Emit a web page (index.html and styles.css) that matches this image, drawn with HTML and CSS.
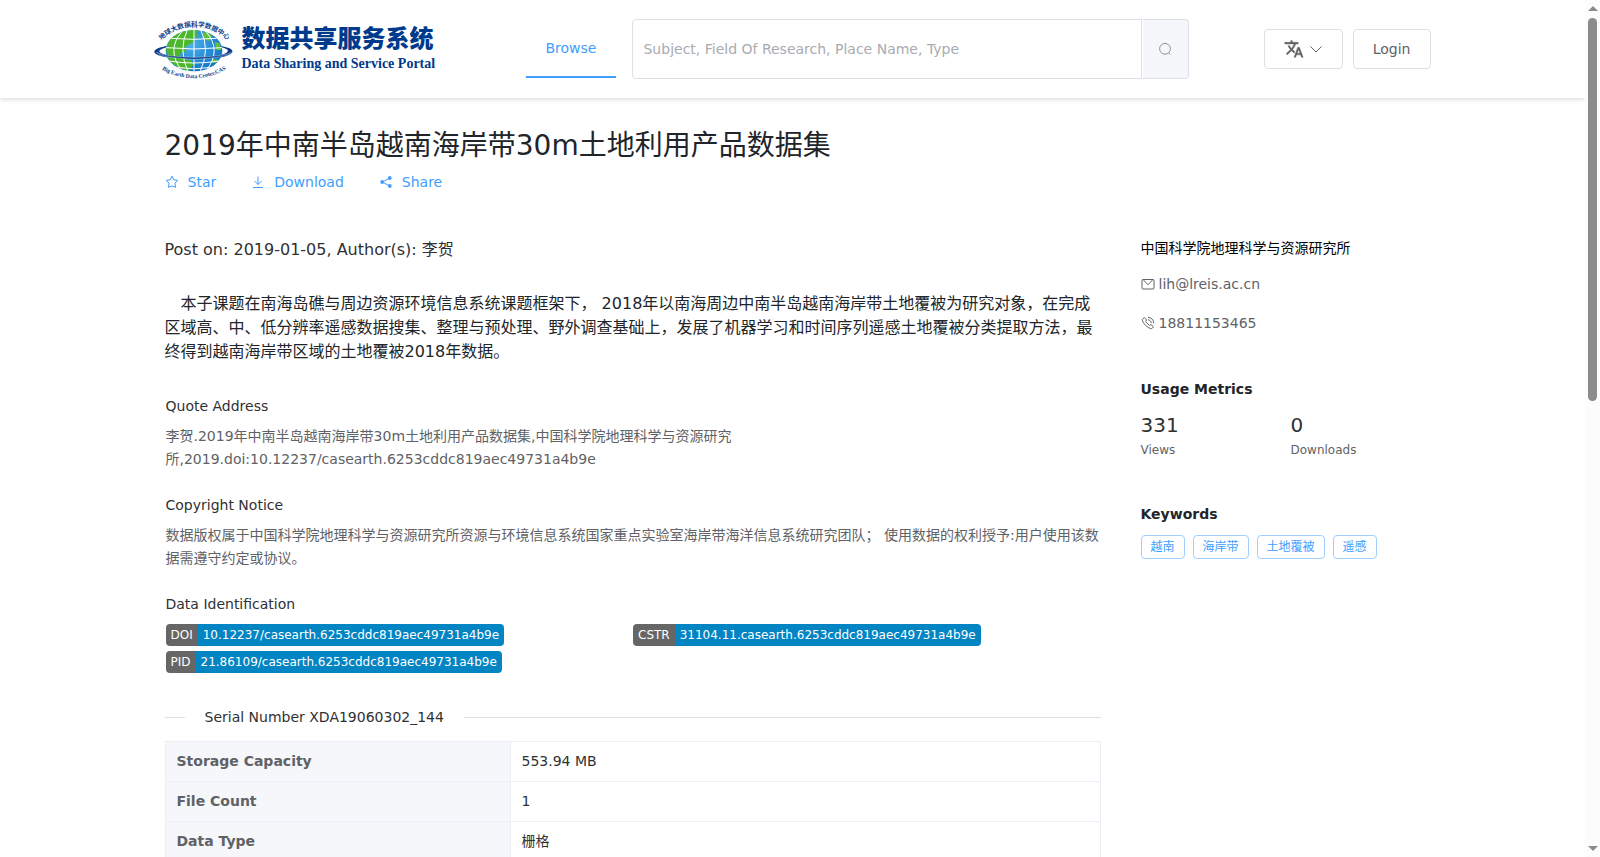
FILE: index.html
```
<!DOCTYPE html>
<html lang="zh-CN">

<head>
    <meta charset="UTF-8">
    <meta name="viewport" content="width=device-width, initial-scale=1.0">
    <title>2019年中南半岛越南海岸带30m土地利用产品数据集</title>
    <link rel="stylesheet" href="styles.css">
</head>

<body>
    <div class="page">
        <header class="header">
            <div class="container header-inner">
                <a class="logo" href="#">
                    <svg class="logo-globe" viewBox="40 55 240 189" aria-hidden="true">
                        <defs>
                            <path id="arc-top" d="M58 126 A140 140 0 0 1 264 126" />
                            <path id="arc-bottom" d="M60 207 Q158 264 260 207" />
                            <radialGradient id="sea" cx="0.4" cy="0.35" r="0.7">
                                <stop offset="0" stop-color="#4fb4ec" />
                                <stop offset="1" stop-color="#0a6fc2" />
                            </radialGradient>
                            <clipPath id="ball"><ellipse cx="160" cy="153" rx="85" ry="62" /></clipPath>
                        </defs>
                        <path d="M82 138 C30 146 28 163 74 172 C130 184 200 184 250 171 C290 160 280 145 240 139 L242 143 C268 149 270 158 240 166 C195 176 125 176 78 166 C46 158 50 150 82 142 Z" fill="#0b3d8c" />
                        <g clip-path="url(#ball)">
                            <rect x="70" y="85" width="180" height="135" fill="url(#sea)" />
                            <path d="M76 150 C82 120 100 98 140 91 L178 92 L166 100 L174 108 L160 116 L158 128 L146 134 L130 146 L138 156 L122 158 L116 168 L132 178 L150 182 L158 194 L146 214 L116 206 L86 184 Z" fill="#4cb72c" />
                            <path d="M188 98 L206 100 L214 112 L204 124 L190 116 Z M222 128 L236 130 L242 150 L228 152 Z M216 178 L234 180 L226 190 L212 188 Z" fill="#63c03b" />
                            <g fill="none" stroke="#fff" stroke-width="3">
                                <path d="M160 91 V216 M140 91 Q112 150 142 216 M180 91 Q210 150 178 216 M124 96 Q76 150 122 211 M196 96 Q244 150 198 211" />
                                <path d="M92 116 Q160 122 228 116 M76 144 Q160 152 244 144 M84 184 Q160 196 236 184 M108 203 Q160 212 212 203" />
                            </g>
                        </g>
                        <path d="M48 158 Q66 170 160 173 Q254 170 272 158 Q264 174 160 179 Q56 174 48 158 Z" fill="#0b3d8c" stroke="#fff" stroke-width="1" />
                        <text class="globe-zh"><textPath href="#arc-top" startOffset="50%">地球大数据科学数据中心</textPath></text>
                        <text class="globe-en"><textPath href="#arc-bottom" startOffset="50%">Big Earth Data Center,CAS</textPath></text>
                    </svg>
                    <span class="logo-text">
                        <span class="logo-zh">数据共享服务系统</span>
                        <span class="logo-en">Data Sharing and Service Portal</span>
                    </span>
                </a>
                <nav class="nav">
                    <a class="nav-item" href="#">Browse</a>
                </nav>
                <form class="search">
                    <input class="search-input" type="text" aria-label="Search" placeholder="Subject, Field Of Research, Place Name, Type">
                    <button class="search-btn" type="button" aria-label="Search">
                        <svg class="icon" viewBox="0 0 14 14"><circle cx="7" cy="6.8" r="5.4" /><path d="M10.6 10.8l1.8 1.8" /></svg>
                    </button>
                </form>
                <div class="actions">
                    <button class="btn" type="button" aria-label="Language">
                        <svg class="icon-lang" viewBox="0 0 24 24"><path d="M12.87 15.07l-2.54-2.51.03-.03c1.74-1.94 2.98-4.17 3.71-6.53H17V4h-7V2H8v2H1v1.99h11.17C11.5 7.92 10.44 9.75 9 11.35 8.07 10.32 7.3 9.19 6.69 8h-2c.73 1.63 1.73 3.17 2.98 4.56l-5.09 5.02L4 19l5-5 3.11 3.11.76-2.04zM18.5 10h-2L12 22h2l1.12-3h4.75L21 22h2l-4.5-12zm-2.62 7l1.62-4.33L19.12 17h-3.24z" /></svg>
                        <svg class="icon" viewBox="0 0 14 14"><path d="M1.5 4.500l5.500 5.500 5.500-5.500" /></svg>
                    </button>
                    <button class="btn" type="button">Login</button>
                </div>
            </div>
        </header>

        <div class="container content">
            <h1 class="title">2019年中南半岛越南海岸带30m土地利用产品数据集</h1>
            <div class="links">
                <a class="link" href="#">
                    <svg class="icon" viewBox="0 0 14 14"><path d="M7 1.200l1.800 3.600 4 .6-2.900 2.800.7 4.200L7 10.900l-3.600 1.500.7-4.200L1.200 5.400l4-.6z" /></svg>
                    Star
                </a>
                <a class="link" href="#">
                    <svg class="icon" viewBox="0 0 14 14"><path d="M7 1.500v8M3.500 6L7 9.500 10.500 6M2 12.500h10" /></svg>
                    Download
                </a>
                <a class="link" href="#">
                    <svg class="icon" viewBox="0 0 14 14"><path d="M10.800 3L3.300 7l7.500 4" /><g fill="currentColor" stroke="none"><circle cx="10.800" cy="3" r="1.900" /><circle cx="3.200" cy="7" r="1.900" /><circle cx="10.800" cy="11" r="1.900" /></g></svg>
                    Share
                </a>
            </div>

            <div class="columns">
                <main class="main">
                    <p class="post">Post on: 2019-01-05, Author(s): 李贺</p>
                    <p class="summary">本子课题在南海岛礁与周边资源环境信息系统课题框架下， 2018年以南海周边中南半岛越南海岸带土地覆被为研究对象，在完成区域高、中、低分辨率遥感数据搜集、整理与预处理、野外调查基础上，发展了机器学习和时间序列遥感土地覆被分类提取方法，最终得到越南海岸带区域的土地覆被2018年数据。</p>

                    <section class="block">
                        <h2 class="block-title">Quote Address</h2>
                        <p class="block-text">李贺.2019年中南半岛越南海岸带30m土地利用产品数据集,中国科学院地理科学与资源研究所,2019.doi:10.12237/casearth.6253cddc819aec49731a4b9e</p>
                    </section>
                    <section class="block">
                        <h2 class="block-title">Copyright Notice</h2>
                        <p class="block-text">数据版权属于中国科学院地理科学与资源研究所资源与环境信息系统国家重点实验室海岸带海洋信息系统研究团队； 使用数据的权利授予:用户使用该数据需遵守约定或协议。</p>
                    </section>
                    <section class="block">
                        <h2 class="block-title">Data Identification</h2>
                        <div class="ids">
                            <div class="id"><span class="id-name">DOI</span><span class="id-value">10.12237/casearth.6253cddc819aec49731a4b9e</span></div>
                            <div class="id"><span class="id-name">CSTR</span><span class="id-value">31104.11.casearth.6253cddc819aec49731a4b9e</span></div>
                            <div class="id"><span class="id-name">PID</span><span class="id-value">21.86109/casearth.6253cddc819aec49731a4b9e</span></div>
                        </div>
                    </section>

                    <div class="divider">Serial Number XDA19060302_144</div>

                    <table class="info">
                        <tr>
                            <th scope="row">Storage Capacity</th>
                            <td>553.94 MB</td>
                        </tr>
                        <tr>
                            <th scope="row">File Count</th>
                            <td>1</td>
                        </tr>
                        <tr>
                            <th scope="row">Data Type</th>
                            <td>栅格</td>
                        </tr>
                    </table>
                </main>

                <aside class="side">
                    <p class="org">中国科学院地理科学与资源研究所</p>
                    <p class="contact">
                        <svg class="icon" viewBox="0 0 14 14"><rect x="1" y="2.500" width="12" height="9.500" rx="1" /><path d="M2.500 3L7 7.800 11.500 3" /></svg>
                        lih@lreis.ac.cn
                    </p>
                    <p class="contact">
                        <svg class="icon" viewBox="0 0 14 14"><path d="M3.300 1.500L5.700 4 4.500 5.600l4 4L10 8.400l2.500 2.400-1.800 1.900C7.500 13 .8 6.500 1.300 3.500zM7 1.300c3 0 5.700 2.500 5.700 5.700M7 3.800c1.800 0 3.200 1.400 3.200 3.200" /></svg>
                        18811153465
                    </p>

                    <h2 class="side-title">Usage Metrics</h2>
                    <div class="metrics">
                        <div class="metric"><span class="metric-num">331</span><span class="metric-name">Views</span></div>
                        <div class="metric"><span class="metric-num">0</span><span class="metric-name">Downloads</span></div>
                    </div>

                    <h2 class="side-title">Keywords</h2>
                    <div class="tags">
                        <span class="tag">越南</span>
                        <span class="tag">海岸带</span>
                        <span class="tag">土地覆被</span>
                        <span class="tag">遥感</span>
                    </div>
                </aside>
            </div>
        </div>
    </div>

    <div class="scrollbar" aria-hidden="true">
        <span class="arrow arrow-up"></span>
        <span class="thumb"></span>
        <span class="arrow arrow-down"></span>
    </div>
</body>

</html>
```
FILE: styles.css
```
*,
*::before,
*::after {
    box-sizing: border-box;
}

body {
    margin: 0;
    display: flex;
    height: 100vh;
    overflow: hidden;
    font-family: "DejaVu Sans", "Noto Sans CJK SC", sans-serif;
    font-size: 14px;
    line-height: 24px;
    color: #212529;
    background: #fff;
}

h1,
h2,
p {
    margin: 0;
    font-weight: normal;
}

a {
    text-decoration: none;
}

button,
input {
    font-family: inherit;
    font-size: 14px;
}

.page {
    flex: 1;
    min-width: 0;
    overflow-y: auto;
    scrollbar-width: none;
}

.container {
    max-width: 1280px;
    margin: 0 auto;
}

.icon {
    width: 14px;
    height: 14px;
    flex: none;
    fill: none;
    stroke: currentColor;
    stroke-width: 1;
}

/* header */
.header {
    box-shadow: 0 2px 4px rgba(0, 0, 0, 0.12);
}

.header-inner {
    display: flex;
    align-items: center;
    height: 98px;
    padding: 0 2px 0 1px;
}

.logo {
    display: flex;
    align-items: center;
    gap: 8px;
    width: 372px;
    color: #003a8c;
}

.logo-globe {
    width: 80px;
    height: 63px;
    overflow: visible;
}

.globe-zh {
    font-size: 20px;
    font-weight: bold;
    text-anchor: middle;
    fill: #0b3d8c;
}

.globe-en {
    font-family: "Liberation Serif", serif;
    font-size: 17px;
    font-weight: bold;
    text-anchor: middle;
    fill: #0b3d8c;
}

.logo-text {
    display: flex;
    flex-direction: column;
    white-space: nowrap;
}

.logo-zh {
    font-family: "Noto Sans CJK SC", sans-serif;
    font-size: 24px;
    font-weight: 900;
    line-height: 30px;
}

.logo-en {
    font-family: "Liberation Serif", serif;
    font-size: 14px;
    font-weight: bold;
    line-height: 24px;
}

.nav-item {
    display: block;
    height: 58px;
    padding: 0 20px;
    line-height: 56px;
    color: #409eff;
    border-bottom: 2px solid #409eff;
}

.search {
    display: flex;
    flex: 1;
    height: 60px;
    margin: 0 75px 0 16px;
}

.search-input {
    flex: 1;
    min-width: 0;
    padding: 0 10px;
    color: #606266;
    border: 1px solid #dcdfe6;
    border-radius: 4px 0 0 4px;
    outline: none;
}

.search-input::placeholder {
    color: #a8abb2;
}

.search-btn {
    display: flex;
    align-items: center;
    justify-content: center;
    width: 47px;
    padding: 0;
    color: #909399;
    background: #f5f7fa;
    border: 1px solid #dcdfe6;
    border-left-color: #fff;
    border-radius: 0 4px 4px 0;
}

.actions {
    display: flex;
    gap: 10px;
}

.btn {
    display: flex;
    align-items: center;
    gap: 5px;
    height: 40px;
    padding: 0 19px;
    color: #606266;
    background: #fff;
    border: 1px solid #dcdfe6;
    border-radius: 4px;
}

.icon-lang {
    width: 20px;
    height: 20px;
    fill: #606266;
    stroke: #606266;
    stroke-width: 0.5;
}

/* dataset */
.content {
    padding: 30px 12px 40px;
}

.title {
    font-size: 28px;
    line-height: 36px;
}

.links {
    display: flex;
    gap: 35px;
    margin-top: 6px;
}

.link {
    display: flex;
    align-items: center;
    gap: 9px;
    color: #409eff;
}

.columns {
    display: flex;
    gap: 40px;
    margin-top: 44px;
}

.main {
    flex: 0 0 936px;
    min-width: 0;
}

.post {
    color: #303133;
    font-size: 16px;
}

.summary {
    margin-top: 30px;
    font-size: 16px;
    text-indent: 1em;
}

.block {
    margin-top: 23px;
    padding-left: 1px;
}

.summary + .block {
    margin-top: 31px;
}

.block-title {
    color: #303133;
    font-size: 14px;
    line-height: 23px;
}

.block-text {
    margin-top: 7px;
    color: #606266;
    line-height: 23px;
}

.ids {
    display: grid;
    grid-template-columns: 1fr 1fr;
    row-gap: 5px;
    margin-top: 8px;
}

.id {
    display: flex;
    justify-self: start;
    overflow: hidden;
    color: #fff;
    font-size: 12px;
    line-height: 22px;
    border-radius: 4px;
}

.id-name {
    padding: 0 5px;
    background: #666;
}

.id-value {
    padding: 0 5px;
    background: #0384c3;
}

.divider {
    display: flex;
    align-items: center;
    gap: 20px;
    margin: 32px 0 12px;
    color: #303133;
}

.divider::before,
.divider::after {
    content: "";
    width: 20px;
    border-top: 1px solid #dcdfe6;
}

.divider::after {
    flex: 1;
}

.info {
    width: 100%;
    border-collapse: collapse;
    line-height: 23px;
}

.info th,
.info td {
    padding: 8px 11px;
    text-align: left;
    border: 1px solid #ebeef5;
}

.info th {
    width: 345px;
    color: #606266;
    background: #f5f7fa;
}

.info td {
    color: #303133;
}

/* sidebar */
.side {
    flex: 1;
}

.org {
    color: #000;
    line-height: 20px;
}

.contact {
    display: flex;
    align-items: center;
    gap: 4px;
    margin-top: 14px;
    color: #606266;
}

.contact + .contact {
    margin-top: 15px;
}

.side-title {
    margin-top: 42px;
    font-size: 14px;
    font-weight: bold;
}

.metrics {
    display: grid;
    grid-template-columns: repeat(2, 150px);
    margin-top: 12px;
}

.metric {
    display: flex;
    flex-direction: column;
    gap: 1px;
}

.metric-num {
    color: #303133;
    font-size: 20px;
}

.metric-name {
    color: #606266;
    font-size: 12px;
}

.metrics + .side-title {
    margin-top: 40px;
}

.tags {
    display: flex;
    flex-wrap: wrap;
    gap: 8px;
    margin-top: 9px;
}

.tag {
    height: 24px;
    padding: 0 9px;
    color: #409eff;
    font-size: 12px;
    line-height: 22px;
    border: 1px solid #a0cfff;
    border-radius: 4px;
}

/* scrollbar */
.scrollbar {
    display: flex;
    flex-direction: column;
    align-items: center;
    width: 15px;
    padding: 6px 0;
    background: #fcfcfc;
}

.arrow {
    border: 5px solid transparent;
}

.arrow-up {
    border-top: 0;
    border-bottom-color: #8b8b8b;
}

.arrow-down {
    border-bottom: 0;
    border-top-color: #8b8b8b;
    margin-top: auto;
}

.thumb {
    width: 9px;
    height: calc(45vh - 3px);
    margin-top: 7px;
    background: #8b8b8b;
    border-radius: 5px;
}
```
